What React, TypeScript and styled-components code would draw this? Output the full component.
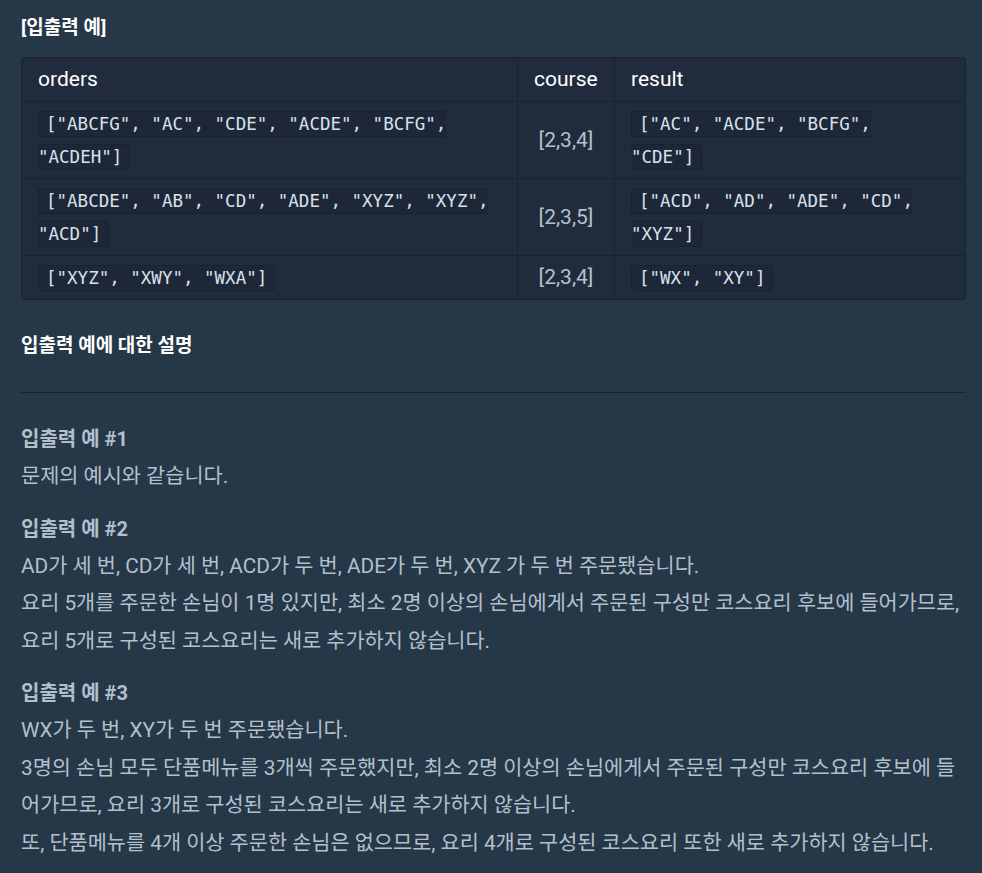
import styled, { createGlobalStyle } from "styled-components";

type Row = {
  orders: string;
  course: string;
  result: string;
};

const rows: Row[] = [
  {
    orders: '["ABCFG", "AC", "CDE", "ACDE", "BCFG", "ACDEH"]',
    course: "[2,3,4]",
    result: '["AC", "ACDE", "BCFG", "CDE"]',
  },
  {
    orders: '["ABCDE", "AB", "CD", "ADE", "XYZ", "XYZ", "ACD"]',
    course: "[2,3,5]",
    result: '["ACD", "AD", "ADE", "CD", "XYZ"]',
  },
  {
    orders: '["XYZ", "XWY", "WXA"]',
    course: "[2,3,4]",
    result: '["WX", "XY"]',
  },
];

const explanations = [
  {
    title: "입출력 예 #1",
    lines: ["문제의 예시와 같습니다."],
  },
  {
    title: "입출력 예 #2",
    lines: [
      "AD가 세 번, CD가 세 번, ACD가 두 번, ADE가 두 번, XYZ 가 두 번 주문됐습니다.",
      "요리 5개를 주문한 손님이 1명 있지만, 최소 2명 이상의 손님에게서 주문된 구성만 코스요리 후보에 들어가므로, 요리 5개로 구성된 코스요리는 새로 추가하지 않습니다.",
    ],
  },
  {
    title: "입출력 예 #3",
    lines: [
      "WX가 두 번, XY가 두 번 주문됐습니다.",
      "3명의 손님 모두 단품메뉴를 3개씩 주문했지만, 최소 2명 이상의 손님에게서 주문된 구성만 코스요리 후보에 들어가므로, 요리 3개로 구성된 코스요리는 새로 추가하지 않습니다.",
      "또, 단품메뉴를 4개 이상 주문한 손님은 없으므로, 요리 4개로 구성된 코스요리 또한 새로 추가하지 않습니다.",
    ],
  },
];

export default function App() {
  return (
    <>
      <GlobalStyle />
      <StyledGuide>
        <SectionTitle>[입출력 예]</SectionTitle>
        <Table>
          <thead>
            <tr>
              <Th>orders</Th>
              <Th>course</Th>
              <Th>result</Th>
            </tr>
          </thead>
          <tbody>
            {rows.map((el, idx) => (
              <tr key={idx}>
                <Td>
                  <Code>{el.orders}</Code>
                </Td>
                <Td align="center">{el.course}</Td>
                <Td>
                  <Code>{el.result}</Code>
                </Td>
              </tr>
            ))}
          </tbody>
        </Table>

        <SectionTitle className="desc">입출력 예에 대한 설명</SectionTitle>
        <Divider />

        {explanations.map((el) => (
          <Example key={el.title}>
            <ExampleTitle>{el.title}</ExampleTitle>
            {el.lines.map((line, idx) => (
              <Line key={idx}>{line}</Line>
            ))}
          </Example>
        ))}
      </StyledGuide>
    </>
  );
}

const GlobalStyle = createGlobalStyle`
  html, body {
    margin: 0;
    padding: 0;
    background-color: #263747;
  }
  body {
    font-family: Roboto, "Noto Sans CJK KR", sans-serif;
    color: #b2c0cc;
  }
`;

const StyledGuide = styled.div`
  width: 945px;
  padding: 16px 0 0 21px;
`;

const SectionTitle = styled.h5`
  margin: 0 0 17px;
  font-size: 19px;
  line-height: 24px;
  font-weight: 700;
  color: #ffffff;
  &.desc {
    margin: 34px 0 34px;
  }
`;

const Table = styled.table`
  width: 100%;
  border-collapse: separate;
  border-spacing: 0;
  background-color: #202b3d;
  border: 1px solid #172334;
  border-radius: 4px;
  overflow: hidden;
  th:first-child {
    width: 463px;
  }
  th:nth-child(2) {
    width: 64px;
  }
`;

const Th = styled.th`
  padding: 5px 16px;
  text-align: left;
  font-size: 21px;
  line-height: 33px;
  font-weight: 400;
  color: #ffffff;
  border-bottom: 1px solid #172334;
  & + & {
    border-left: 1px solid #172334;
  }
`;

const Td = styled.td<{ align?: "center" | "left" }>`
  padding: 5px 16px;
  text-align: ${(props) => props.align || "left"};
  vertical-align: middle;
  font-size: 21px;
  line-height: 33px;
  color: #b2c0cc;
  tr:not(:last-child) > & {
    border-bottom: 1px solid #172334;
  }
  & + & {
    border-left: 1px solid #172334;
  }
`;

const Code = styled.code`
  font-family: "DejaVu Sans Mono", monospace;
  font-size: 17.5px;
  line-height: normal;
  color: #d7e2eb;
  background-color: #1e2738;
  border: 1px solid #172334;
  border-radius: 4px;
  padding: 2px 7px;
`;

const Divider = styled.hr`
  margin: 0 0 28px;
  border: 0;
  border-top: 1px solid #172334;
`;

const Example = styled.div`
  margin-bottom: 15px;
`;

const ExampleTitle = styled.h6`
  margin: 0;
  font-size: 20px;
  line-height: 37px;
  font-weight: 700;
  color: #b2c0cc;
`;

const Line = styled.p`
  margin: 0;
  font-size: 20.8px;
  line-height: 37.5px;
`;
